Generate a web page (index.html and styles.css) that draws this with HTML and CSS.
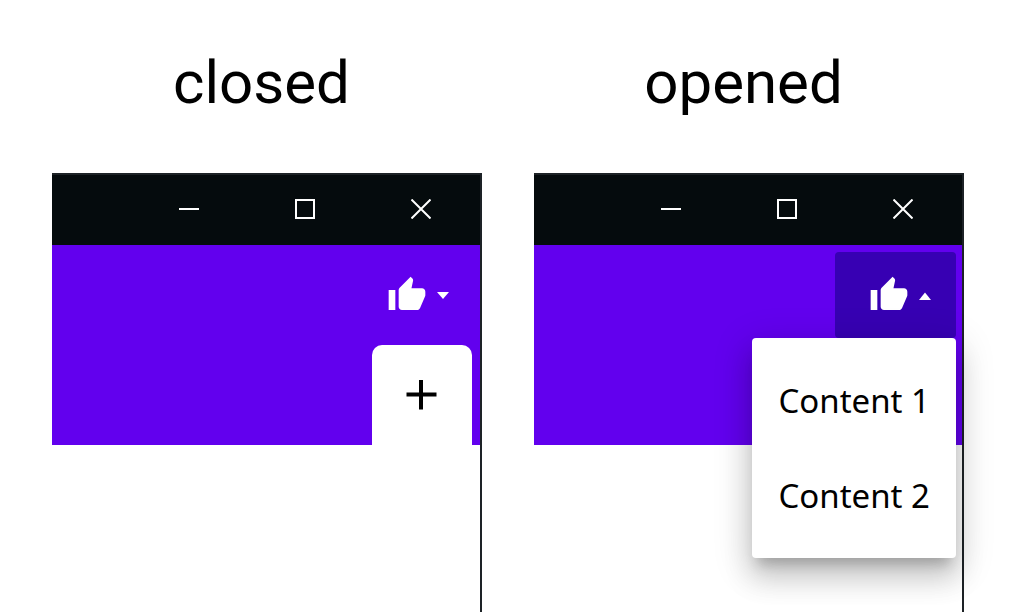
FILE: index.html
```html
<!DOCTYPE html>
<html lang="en">
<head>
<meta charset="utf-8">
<title>Toolbar menu states</title>
<link rel="stylesheet" href="styles.css">
</head>
<body>
<main class="states">
  <section class="state">
    <h2 class="state-title">closed</h2>
    <div class="window">
      <div class="titlebar">
        <button class="window-button" aria-label="Minimize"><svg width="20" height="20" viewBox="0 0 20 20"><path d="M0 10H20"/></svg></button>
        <button class="window-button" aria-label="Maximize"><svg width="20" height="20" viewBox="0 0 20 20"><path d="M1 1H19V19H1Z"/></svg></button>
        <button class="window-button" aria-label="Close"><svg width="20" height="20" viewBox="0 0 20 20"><path d="M.5 .5L19.5 19.5M19.5 .5L.5 19.5"/></svg></button>
      </div>
      <div class="toolbar">
        <div class="dropdown">
          <button class="like-button" aria-label="Like" aria-haspopup="true" aria-expanded="false">
            <svg class="thumb" viewBox="0 0 24 24"><path d="M1 21h4V9H1v12zm22-11c0-1.1-.9-2-2-2h-6.31l.95-4.57.03-.32c0-.41-.17-.79-.44-1.06L14.17 1 7.59 7.59C7.22 7.95 7 8.45 7 9v10c0 1.1.9 2 2 2h9c.83 0 1.54-.5 1.84-1.22l3.02-7.05c.09-.23.14-.47.14-.73v-2z"/></svg>
            <svg class="arrow" viewBox="0 0 12 10"><path d="M0 2H12L6 9Z"/></svg>
          </button>
        </div>
        <button class="add-tab" aria-label="Add"><svg width="32" height="30" viewBox="0 0 32 30"><path d="M.5 14.500H30.500M15 0V29.500"/></svg></button>
      </div>
    </div>
  </section>
  <section class="state">
    <h2 class="state-title">opened</h2>
    <div class="window">
      <div class="titlebar">
        <button class="window-button" aria-label="Minimize"><svg width="20" height="20" viewBox="0 0 20 20"><path d="M0 10H20"/></svg></button>
        <button class="window-button" aria-label="Maximize"><svg width="20" height="20" viewBox="0 0 20 20"><path d="M1 1H19V19H1Z"/></svg></button>
        <button class="window-button" aria-label="Close"><svg width="20" height="20" viewBox="0 0 20 20"><path d="M.5 .5L19.5 19.5M19.5 .5L.5 19.5"/></svg></button>
      </div>
      <div class="toolbar">
        <div class="dropdown">
          <button class="like-button like-button-open" aria-label="Like" aria-haspopup="true" aria-expanded="true">
            <svg class="thumb" viewBox="0 0 24 24"><path d="M1 21h4V9H1v12zm22-11c0-1.1-.9-2-2-2h-6.31l.95-4.57.03-.32c0-.41-.17-.79-.44-1.06L14.17 1 7.59 7.59C7.22 7.95 7 8.45 7 9v10c0 1.1.9 2 2 2h9c.83 0 1.54-.5 1.84-1.22l3.02-7.05c.09-.23.14-.47.14-.73v-2z"/></svg>
            <svg class="arrow" viewBox="0 0 12 10"><path d="M0 10H12L6 2.500Z"/></svg>
          </button>
          <div class="menu" role="menu">
            <button class="menu-item" role="menuitem">Content 1</button>
            <button class="menu-item" role="menuitem">Content 2</button>
          </div>
        </div>
      </div>
    </div>
  </section>
</main>
</body>
</html>
```
FILE: styles.css
```css
* {
  box-sizing: border-box;
}

body {
  margin: 0;
  background: #fff;
  color: #000;
  font-family: "Noto Sans", sans-serif;
  overflow: hidden;
}

button {
  margin: 0;
  padding: 0;
  border: 0;
  background: none;
  color: inherit;
  font: inherit;
}

svg {
  display: block;
}

.states {
  display: grid;
  grid-template-columns: 1fr 1fr;
  gap: 52px;
  min-height: 100vh;
  padding: 48px 53px 0 52px;
}

.state {
  display: flex;
  flex-direction: column;
}

.state-title {
  margin: 0 0 55px;
  padding-right: 11px;
  font-family: Roboto, sans-serif;
  font-size: 60px;
  font-weight: 400;
  line-height: 70px;
  text-align: center;
}

.window {
  flex: 1;
  border-top: 2px solid #1d2226;
  border-right: 2px solid #1d2226;
}

.titlebar {
  display: flex;
  justify-content: flex-end;
  height: 70px;
  padding-right: 1px;
  background: #050b0d;
}

.window-button {
  display: flex;
  align-items: center;
  justify-content: center;
  width: 116px;
  padding-bottom: 2px;
}

.window-button path {
  fill: none;
  stroke: #fff;
  stroke-width: 2;
}

.toolbar {
  display: flex;
  flex-direction: column;
  align-items: flex-end;
  height: 200px;
  padding: 7px 6px 0;
  background: #6200ee;
}

.dropdown {
  position: relative;
}

.like-button {
  display: flex;
  align-items: center;
  height: 86px;
  padding: 0 25px 0 34px;
  border-radius: 4px;
}

.like-button-open {
  background: #3700b3;
}

.thumb {
  width: 40px;
  height: 40px;
  margin-right: 10px;
  fill: #fff;
}

.arrow {
  width: 12px;
  height: 10px;
  fill: #fff;
}

.add-tab {
  display: flex;
  align-items: center;
  justify-content: center;
  width: 100px;
  height: 100px;
  margin: auto 2px 0 0;
  border-radius: 10px 10px 0 0;
  background: #fff;
}

.add-tab path {
  fill: none;
  stroke: #000;
  stroke-width: 4;
}

.menu {
  position: absolute;
  top: 100%;
  right: 0;
  padding: 15px 0;
  border-radius: 4px;
  background: #fff;
  box-shadow:
    0 12px 12px -6px rgba(0, 0, 0, 0.2),
    0 20px 28px 2px rgba(0, 0, 0, 0.14),
    0 8px 36px 6px rgba(0, 0, 0, 0.12);
}

.menu-item {
  display: block;
  padding: 0 26px;
  font-size: 33px;
  line-height: 95px;
  white-space: nowrap;
}
```
